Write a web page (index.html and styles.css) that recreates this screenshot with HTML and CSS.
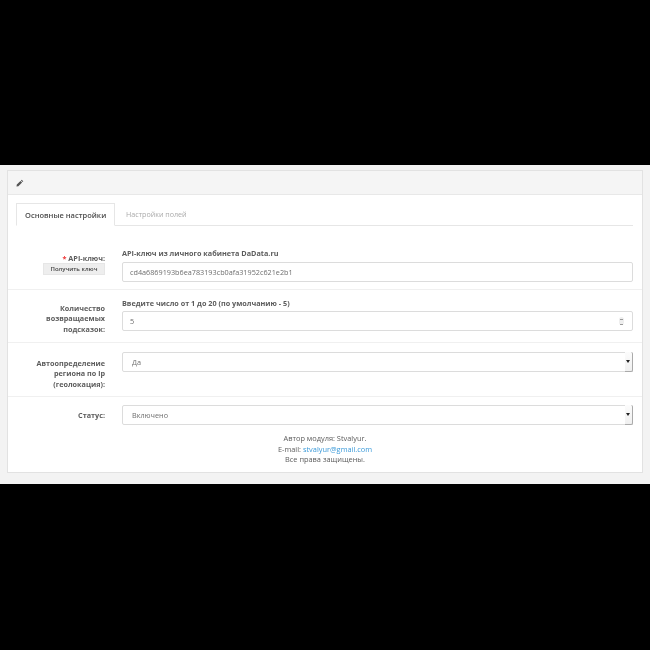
FILE: index.html
```html
<!DOCTYPE html>
<html lang="ru">
<head>
<meta charset="utf-8">
<title>DaData</title>
<link rel="stylesheet" href="styles.css">
</head>
<body>
<main class="band">
  <section class="panel">
    <header class="panel-head">
      <svg class="pencil" viewBox="0 0 10 10" width="8" height="8" aria-hidden="true"><path d="M7.1.9 9.1 2.9 8.2 3.8 6.2 1.8ZM5.6 2.4 7.6 4.4 3 9 .6 9.4 1 7Z" fill="#555"/></svg>
    </header>
    <div class="panel-body">
      <nav class="tabs">
        <a class="tab active">Основные настройки</a>
        <a class="tab">Настройки полей</a>
      </nav>
      <form class="form">
        <div class="row row-key">
          <div class="label"><span><b class="req">*</b> API-ключ:</span><button type="button" class="btn">Получить ключ</button></div>
          <div class="field"><p class="hint">API-ключ из личного кабинета DaData.ru</p><input class="control" value="cd4a6869193b6ea783193cb0afa31952c621e2b1"></div>
        </div>
        <div class="row row-count">
          <div class="label"><span>Количество возвращаемых подсказок:</span></div>
          <div class="field"><p class="hint">Введите число от 1 до 20 (по умолчанию - 5)</p>
            <div class="wrap"><input class="control" value="5"><span class="spin"></span></div></div>
        </div>
        <div class="row row-geo">
          <div class="label"><span>Автоопределение региона по ip (геолокация):</span></div>
          <div class="field"><div class="wrap"><div class="control select">Да</div><span class="arrow"></span></div></div>
        </div>
        <div class="row row-status">
          <div class="label"><span>Статус:</span></div>
          <div class="field"><div class="wrap"><div class="control select">Включено</div><span class="arrow"></span></div></div>
        </div>
      </form>
      <footer class="credits">
        <p>Автор модуля: Stvalyur.</p>
        <p>E-mail: <a class="mail">stvalyur@gmail.com</a></p>
        <p>Все права защищены.</p>
      </footer>
    </div>
  </section>
</main>
</body>
</html>
```
FILE: styles.css
```css
* { box-sizing: border-box; }
html, body { margin: 0; height: 650px; background: #000; overflow: hidden; }
body { padding-top: 165px; font-family: "Open Sans", sans-serif; font-size: 7.25px; color: #666; }
.band { height: 319px; background: #f3f3f3; padding: 5px 7px 0 7px; }
.panel { width: 636px; height: 303px; background: #fff; border: 1px solid #e2e2e2; filter: blur(.3px); }
.panel-head { height: 24px; background: #f5f5f5; border-bottom: 1px solid #e8e8e8; padding: 8px 0 0 8px; }
.pencil { display: block; }
.panel-body { padding: 8px 0 0 0; }
.tabs { display: flex; height: 23px; margin: 0 9px 0 8px; border-bottom: 1px solid #e6e6e6; }
.tab { padding: 5.5px 8px 0 11px; color: #aaa; font-size: 7.15px; line-height: 11px; }
.tab.active { width: 99px; height: 23px; background: #fff; border: 1px solid #e6e6e6; border-bottom-color: #fff; color: #4d4d4d; font-size: 7.5px; font-weight: 600; white-space: nowrap; padding-left: 8px; }
.row { display: flex; border-bottom: 1px solid #f0f0f0; padding-right: 9px; }
.row-key { height: 64px; padding-top: 22px; }
.row-count { height: 53px; padding-top: 8px; }
.row-geo { height: 54px; padding-top: 9px; }
.row-status { height: 37px; padding-top: 8px; border-bottom: 0; }
.label { width: 97px; flex: none; display: flex; flex-direction: column; align-items: flex-end; text-align: right; font-weight: 700; color: #5c5c5c; line-height: 10.4px; padding-top: 5px; margin-right: 17px; }
.row-geo .label { padding-top: 6px; }
.btn { width: 62px; height: 12px; margin-top: 0; padding: 0; border: 1px solid #e6e6e6; background: #eee; font: 600 6px/10px "Open Sans", sans-serif; color: #444; }
.req { color: #e33; font-weight: 700; }
.field { flex: 1; min-width: 0; }
.hint { margin: 0 0 3px; height: 10px; font-weight: 700; color: #5c5c5c; line-height: 10px; }
.row-key .hint { margin-bottom: 4px; }
.control { display: block; width: 100%; height: 20px; padding: 0 7px; border: 1px solid #dcdcdc; border-radius: 2px; background: #fff; color: #6e6e6e; font: 7.25px/18px "Open Sans", sans-serif; outline: none; }
.select { padding-left: 9px; }
.wrap { position: relative; }
.spin { position: absolute; right: 9px; top: 6px; width: 5px; height: 8px; background: #eee; border-radius: 2.5px; }
.spin::after { content: ""; position: absolute; left: 1px; top: 2px; width: 3px; height: 4px; border-top: 1px solid #999; border-bottom: 1px solid #999; }
.arrow { position: absolute; right: 0; top: 0; width: 8px; height: 20px; background: linear-gradient(#fcfcfc, #f0f0f0); border-right: 1px solid #aaa; border-bottom: 1px solid #aaa; border-radius: 0 2px 2px 0; }
.arrow::after { content: ""; position: absolute; left: 1px; top: 8px; border: 2px solid transparent; border-top: 3px solid #222; border-bottom: 0; }
.credits { text-align: center; color: #5c5c5c; line-height: 10.5px; margin-top: -1px; font-size: 7.4px; }
.credits p { margin: 0; }
.mail { color: #3b9ad9; }
```
